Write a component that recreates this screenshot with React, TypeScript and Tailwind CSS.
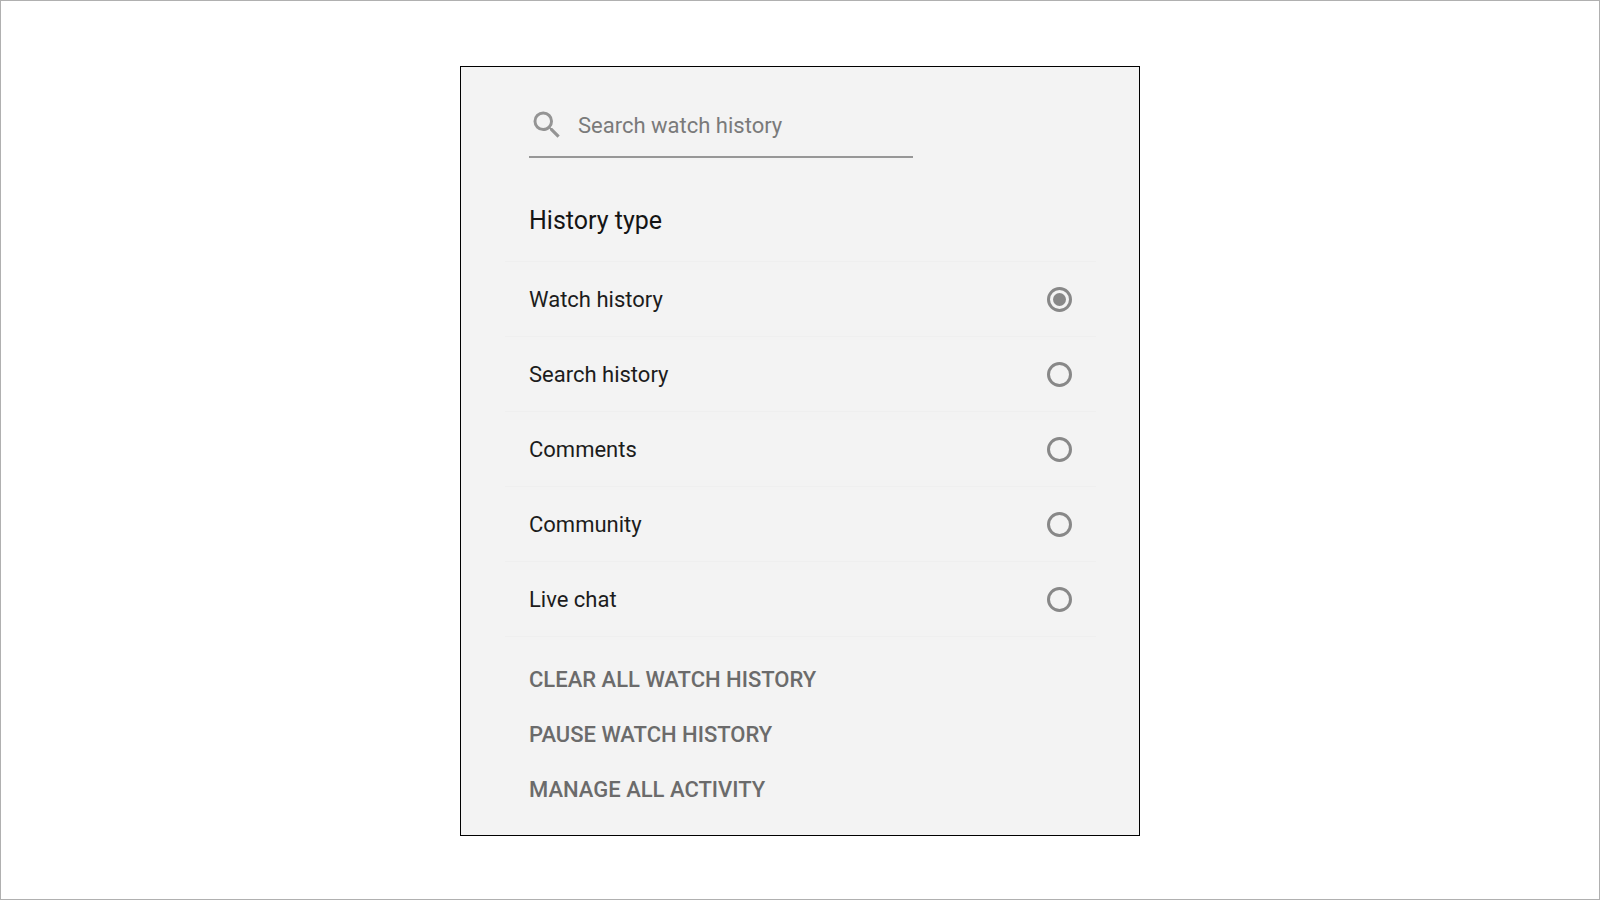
import { useState } from "react";

const historyTypes = ["Watch history", "Search history", "Comments", "Community", "Live chat"];
const actions = ["CLEAR ALL WATCH HISTORY", "PAUSE WATCH HISTORY", "MANAGE ALL ACTIVITY"];

function SearchIcon() {
  return (
    <svg viewBox="0 0 24 24" className="size-9 shrink-0 fill-[#949494]" aria-hidden="true">
      <path d="M15.5 14h-.79l-.28-.27A6.47 6.47 0 0 0 16 9.5 6.5 6.5 0 1 0 9.5 16c1.61 0 3.09-.59 4.23-1.57l.27.28v.79l5 4.99L20.49 19l-4.99-5zm-6 0C7.01 14 5 11.99 5 9.5S7.01 5 9.5 5 14 7.01 14 9.5 11.99 14 9.5 14z" />
    </svg>
  );
}

function TypeOption({ label, checked, onSelect }: { label: string; checked: boolean; onSelect: () => void }) {
  return (
    <label className="flex h-[75px] cursor-pointer items-center justify-between border-b border-[#efefef] px-6 text-[22px] text-[#1c1c1c]">
      {label}
      <input
        type="radio"
        name="history-type"
        checked={checked}
        onChange={onSelect}
        className="grid size-[25px] appearance-none place-items-center rounded-full border-3 border-[#888888] before:size-[13px] before:rounded-full checked:before:bg-[#888888]"
      />
    </label>
  );
}

export default function App() {
  const [selected, setSelected] = useState(historyTypes[0]);

  return (
    <main className="flex min-h-screen items-start justify-center border border-[#b0b0b0] bg-white pt-[65px] pb-12 font-['Roboto',sans-serif]">
      <section className="w-full max-w-[680px] border border-black bg-[#f3f3f3] pt-10 pr-[43px] pb-[18px] pl-11">
        <div className="mx-6 flex max-w-[384px] items-center gap-[13px] border-b-2 border-[#979797] pb-[13px]">
          <SearchIcon />
          <input
            type="search"
            aria-label="Search watch history"
            placeholder="Search watch history"
            className="min-w-0 flex-1 bg-transparent text-[22px] text-[#1c1c1c] outline-none placeholder:text-[#7a7a7a]"
          />
        </div>
        <fieldset>
          <legend className="px-6 pt-[46px] pb-6 text-[25px] leading-[33px] text-[#141414]">History type</legend>
          <div className="border-t border-[#efefef]">
            {historyTypes.map((type) => (
              <TypeOption key={type} label={type} checked={selected === type} onSelect={() => setSelected(type)} />
            ))}
          </div>
        </fieldset>
        <div className="flex flex-col items-start px-6 pt-[15px]">
          {actions.map((action) => (
            <button key={action} type="button" className="h-[55px] text-[22px] font-medium text-[#6b6b6b]">
              {action}
            </button>
          ))}
        </div>
      </section>
    </main>
  );
}
